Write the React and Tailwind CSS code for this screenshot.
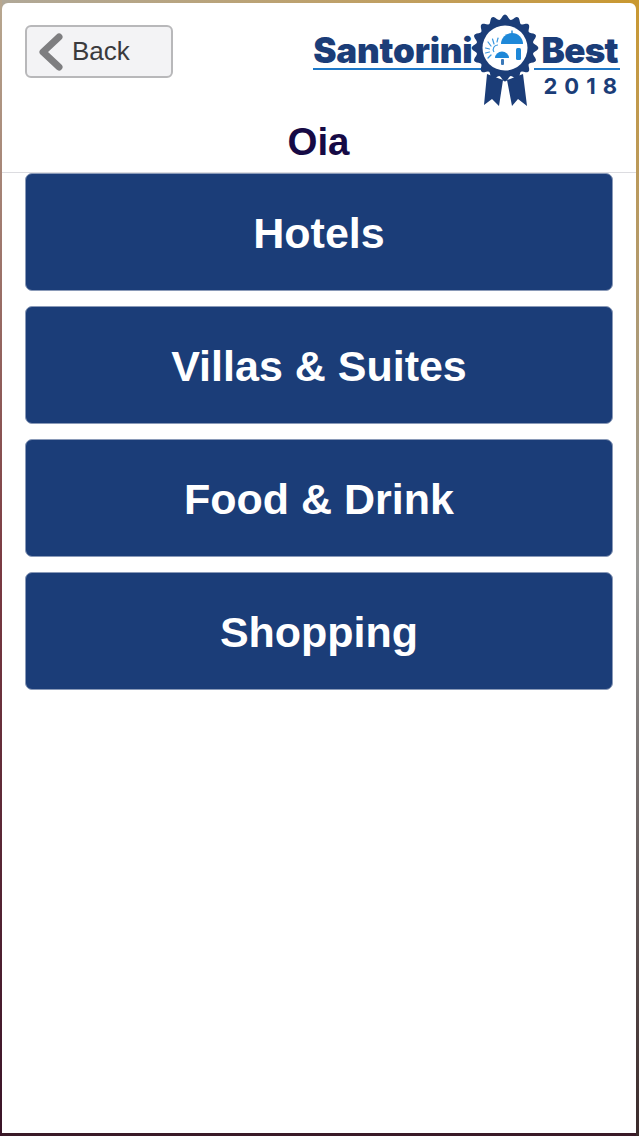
import React from 'react';

const categories = ['Hotels', 'Villas & Suites', 'Food & Drink', 'Shopping'];

// scalloped edge of the rosette
const scallopPath = () => {
  const cx = 35;
  const cy = 34;
  const teeth = 16;
  const steps = 160;
  let d = '';
  for (let i = 0; i < steps; i++) {
    const a = (i / steps) * Math.PI * 2;
    const r = 31 + 2.4 * Math.cos(a * teeth);
    d += `${i === 0 ? 'M' : 'L'}${(cx + r * Math.sin(a)).toFixed(2)} ${(cy - r * Math.cos(a)).toFixed(2)}`;
  }
  return d + 'Z';
};

const Rosette = () => (
  <svg width="70" height="94" viewBox="0 0 70 94" className="shrink-0 block">
    <path d="M17 60 L14 91 L22 85 L29 92 L33 66 Z" fill="#1b3d78" />
    <path d="M53 60 L57 92 L48 85 L42 92 L37 66 Z" fill="#1b3d78" />
    <path d={scallopPath()} fill="#1b3d78" />
    <circle cx="35" cy="34" r="22.5" fill="#ffffff" />
    <path d="M31 30 A11 11 0 0 1 53 30 Z" fill="#1e88d8" />
    <rect x="41.3" y="16.5" width="1.4" height="3" fill="#1e88d8" />
    <rect x="46" y="34" width="5" height="12" rx="1.5" fill="#1e88d8" />
    <path d="M25 44 A7 6.5 0 0 1 39 44 Z" fill="#1e88d8" />
    <rect x="31" y="45" width="3" height="6" rx="1" fill="#3a78b8" />
    <g stroke="#3a98e0" strokeWidth="1.2" strokeLinecap="round">
      <path d="M24 30 L22.5 25" />
      <path d="M21 32 L18 28" />
      <path d="M19.5 35 L15.5 34" />
      <path d="M19.5 38 L15.5 39" />
      <path d="M21 41 L18 44" />
      <path d="M27 28 L28 24" />
    </g>
    <path d="M28 31 A4.5 4.5 0 0 0 24 38" fill="none" stroke="#3a98e0" strokeWidth="1.2" />
  </svg>
);

const Logo = () => (
  <div className="flex items-start mt-[11px] font-['Inter',sans-serif] text-[#1b3d78]">
    <div className="flex flex-col items-end pt-[17px]">
      <span className="block text-[35px] leading-[38px] font-black tracking-[-0.2px]">Santorini</span>
      <div className="h-[2px] w-[168px] bg-[#1e78c8] -mr-[8px] -mt-[1px]" />
    </div>
    <div className="-ml-[3px]">
      <Rosette />
    </div>
    <div className="flex flex-col items-start pt-[17px] -ml-[1px]">
      <span className="block text-[35px] leading-[38px] font-black tracking-[-0.7px] pl-[3px]">Best</span>
      <div className="h-[2px] w-[86px] bg-[#1e78c8] -ml-[5px] -mt-[1px]" />
      <span className="block text-[22px] leading-[26px] font-bold tracking-[7px] pl-[5px] mt-[3px]">2018</span>
    </div>
  </div>
);

const App = () => {
  return (
    <div className="h-[1136px] w-full flex font-['Liberation_Sans',Arial,sans-serif]">
      {/* Device frame */}
      <div className="w-[2px] shrink-0 bg-gradient-to-b from-[#b8a890] via-[#7a3a42] to-[#3a1428]" />
      <div className="flex-1 min-w-0 flex flex-col bg-gradient-to-r from-[#b0a898] to-[#c9982f]">
        <div className="h-[3px] shrink-0" />
        <div className="flex-1 min-h-0 bg-white rounded-t-[6px] flex flex-col">
          {/* Header */}
          <div className="h-[170px] flex flex-col border-b border-[#dcdce0] shrink-0">
            <div className="flex justify-between items-start h-[110px] pl-[23px] pr-[12px]">
              <button className="mt-[22px] w-[148px] h-[53px] flex items-center gap-[9px] pl-[11px] rounded-[6px] border-2 border-[#b8b8ba] bg-[#f3f3f5] text-[#3a3a3c] text-[26px]">
                <svg width="25" height="38" viewBox="0 0 25 38" className="shrink-0">
                  <path d="M21 4 L5 19 L21 34" fill="none" stroke="#7e7e80" strokeWidth="7" strokeLinecap="round" strokeLinejoin="round" />
                </svg>
                <span>Back</span>
              </button>
              <Logo />
            </div>
            <h1 className="text-center text-[38.5px] leading-[44px] font-bold text-[#160a45] pr-[1px] mt-[7px]">Oia</h1>
          </div>

          {/* Categories */}
          <div className="flex flex-col gap-[15px] pl-[23px] pr-[23px]">
            {categories.map((name) => (
              <button
                key={name}
                className="h-[118px] w-full flex items-center justify-center pt-[3px] rounded-[7px] bg-[#1b3d78] border border-[#8a9ab8] text-white text-[43px] font-bold"
              >
                {name}
              </button>
            ))}
          </div>
        </div>
        <div className="h-[3px] shrink-0 bg-[#3a1a28]" />
      </div>
      <div className="w-[3px] shrink-0 bg-gradient-to-b from-[#c9982f] via-[#9a9a98] to-[#3a2a2a]" />
    </div>
  );
};

export default App;
